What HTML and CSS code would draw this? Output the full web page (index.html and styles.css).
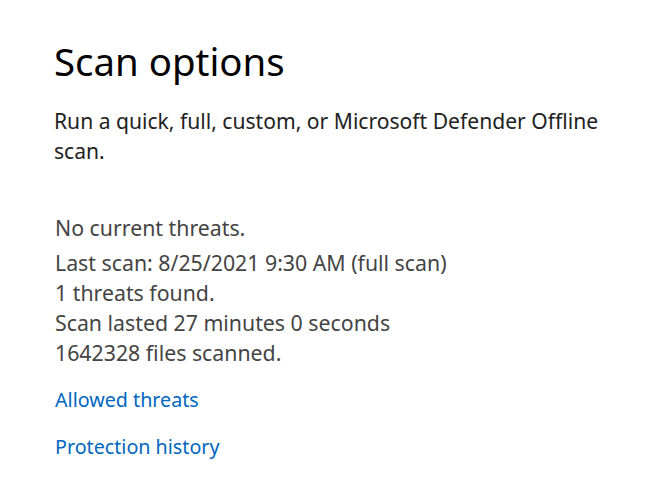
FILE: index.html
```html
<!DOCTYPE html>
<html lang="en">
<head>
  <meta charset="UTF-8" />
  <title>Scan options</title>
  <link rel="stylesheet" href="styles.css">
</head>
<body>
  <div class="page">
    <h1 class="title">Scan options</h1>
    <p class="intro">Run a quick, full, custom, or Microsoft Defender Offline scan.</p>

    <div class="status">
      <p class="status-head">No current threats.</p>
      <p>Last scan: 8/25/2021 9:30 AM (full scan)</p>
      <p>1 threats found.</p>
      <p>Scan lasted 27 minutes 0 seconds</p>
      <p>1642328 files scanned.</p>
    </div>

    <div class="links">
      <a href="#">Allowed threats</a>
      <a href="#">Protection history</a>
    </div>
  </div>
</body>
</html>
```

FILE: styles.css
```css
body {
  margin: 0;
  background: #ffffff;
  font-family: "Noto Sans", "Open Sans", sans-serif;
  color: #444444;
}

.page {
  padding: 35px 30px 0 54px;
  max-width: 565px;
}

.title {
  margin: 0;
  font-size: 38.4px;
  font-weight: 400;
  color: #000000;
  line-height: 52px;
}

.intro {
  margin: 19px 0 0;
  font-size: 21.1px;
  line-height: 30px;
  color: #222222;
}

.status {
  margin-top: 47px;
  padding-left: 1px;
}

.status p {
  margin: 0;
  font-size: 21.3px;
  line-height: 30px;
}

.status .status-head {
  margin-bottom: 5px;
}

.links {
  display: flex;
  flex-direction: column;
  align-items: flex-start;
  gap: 17px;
  margin-top: 17px;
  padding-left: 1px;
}

.links a {
  font-size: 19.7px;
  line-height: 30px;
  color: #0067c0;
  text-decoration: none;
}
```
